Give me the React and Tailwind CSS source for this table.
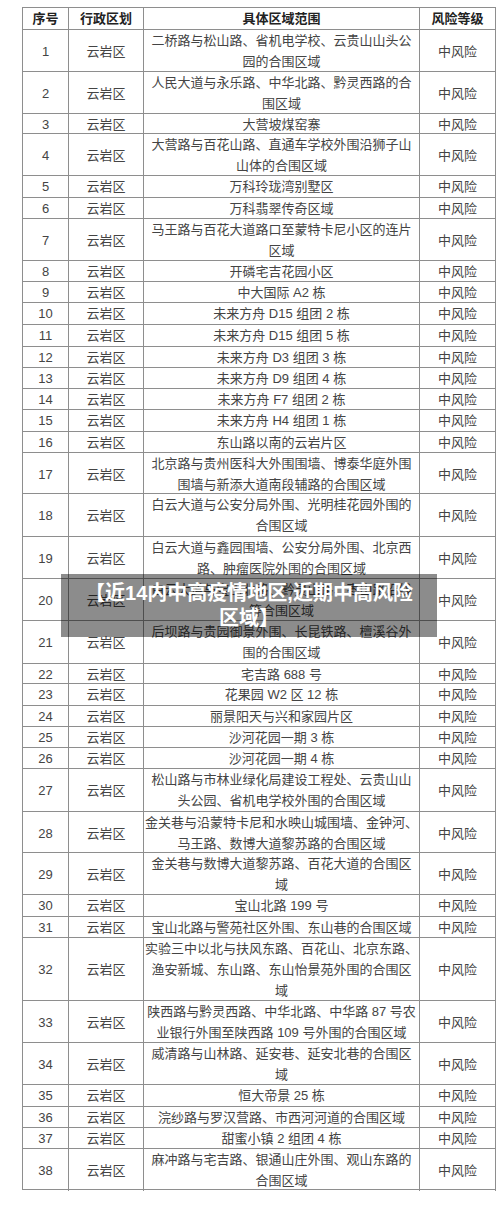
import React from "react";

const rows = [
  { n: 1, h: "h-[42px]", t: ["二桥路与松山路、省机电学校、云贵山山头公", "园的合围区域"] },
  { n: 2, h: "h-[42px]", t: ["人民大道与永乐路、中华北路、黔灵西路的合", "围区域"] },
  { n: 3, h: "h-[20px]", t: ["大营坡煤窑寨"] },
  { n: 4, h: "h-[42px]", t: ["大营路与百花山路、直通车学校外围沿狮子山", "山体的合围区域"] },
  { n: 5, h: "h-[22px]", t: ["万科玲珑湾别墅区"] },
  { n: 6, h: "h-[21px]", t: ["万科翡翠传奇区域"] },
  { n: 7, h: "h-[42px]", t: ["马王路与百花大道路口至蒙特卡尼小区的连片", "区域"] },
  { n: 8, h: "h-[21px]", t: ["开磷宅吉花园小区"] },
  { n: 9, h: "h-[21px]", t: ["中大国际 A2 栋"] },
  { n: 10, h: "h-[22px]", t: ["未来方舟 D15 组团 2 栋"] },
  { n: 11, h: "h-[22px]", t: ["未来方舟 D15 组团 5 栋"] },
  { n: 12, h: "h-[21px]", t: ["未来方舟 D3 组团 3 栋"] },
  { n: 13, h: "h-[21px]", t: ["未来方舟 D9 组团 4 栋"] },
  { n: 14, h: "h-[21px]", t: ["未来方舟 F7 组团 2 栋"] },
  { n: 15, h: "h-[22px]", t: ["未来方舟 H4 组团 1 栋"] },
  { n: 16, h: "h-[21px]", t: ["东山路以南的云岩片区"] },
  { n: 17, h: "h-[41px]", t: ["北京路与贵州医科大外围围墙、博泰华庭外围", "围墙与新添大道南段辅路的合围区域"] },
  { n: 18, h: "h-[43px]", t: ["白云大道与公安分局外围、光明桂花园外围的", "合围区域"] },
  { n: 19, h: "h-[42px]", t: ["白云大道与鑫园围墙、公安分局外围、北京西", "路、肿瘤医院外围的合围区域"] },
  { n: 20, h: "h-[42px]", t: ["白云大道与宝山北路、黔灵山路、枣山路沿线", "等合围区域"] },
  { n: 21, h: "h-[43px]", t: ["后坝路与贵园御景外围、长昆铁路、檀溪谷外", "围的合围区域"] },
  { n: 22, h: "h-[20px]", t: ["宅吉路 688 号"] },
  { n: 23, h: "h-[22px]", t: ["花果园 W2 区 12 栋"] },
  { n: 24, h: "h-[21px]", t: ["丽景阳天与兴和家园片区"] },
  { n: 25, h: "h-[21px]", t: ["沙河花园一期 3 栋"] },
  { n: 26, h: "h-[21px]", t: ["沙河花园一期 4 栋"] },
  { n: 27, h: "h-[43px]", t: ["松山路与市林业绿化局建设工程处、云贵山山", "头公园、省机电学校外围的合围区域"] },
  { n: 28, h: "h-[41px]", t: ["金关巷与沿蒙特卡尼和水映山城围墙、金钟河、", "马王路、数博大道黎苏路的合围区域"] },
  { n: 29, h: "h-[42px]", t: ["金关巷与数博大道黎苏路、百花大道的合围区", "域"] },
  { n: 30, h: "h-[22px]", t: ["宝山北路 199 号"] },
  { n: 31, h: "h-[21px]", t: ["宝山北路与警苑社区外围、东山巷的合围区域"] },
  { n: 32, h: "h-[63px]", t: ["实验三中以北与扶风东路、百花山、北京东路、", "渔安新城、东山路、东山怡景苑外围的合围区", "域"] },
  { n: 33, h: "h-[42px]", t: ["陕西路与黔灵西路、中华北路、中华路 87 号农", "业银行外围至陕西路 109 号外围的合围区域"] },
  { n: 34, h: "h-[42px]", t: ["威清路与山林路、延安巷、延安北巷的合围区", "域"] },
  { n: 35, h: "h-[22px]", t: ["恒大帝景 25 栋"] },
  { n: 36, h: "h-[21px]", t: ["浣纱路与罗汉营路、市西河河道的合围区域"] },
  { n: 37, h: "h-[21px]", t: ["甜蜜小镇 2 组团 4 栋"] },
  { n: 38, h: "h-[41px]", t: ["麻冲路与宅吉路、银通山庄外围、观山东路的", "合围区域"] },
];

const cell = "border-r border-[#8e8e8e] flex flex-col items-center justify-center overflow-visible";

export default function App() {
  return (
    <div className="relative w-[500px] h-[1211px] bg-white pt-[7px] font-['Liberation_Sans','Noto_Sans_CJK_SC',sans-serif] text-[13px] text-[#444]">
      <div className="ml-[22px] w-[474px] border-t border-l border-[#8e8e8e]">
        <div className="grid grid-cols-[46px_75px_276px_76px] h-[22px] border-b border-[#8e8e8e] font-bold text-[#222] leading-[21px]">
          <div className={cell}>序号</div>
          <div className={cell}>行政区划</div>
          <div className={cell}>具体区域范围</div>
          <div className={cell}>风险等级</div>
        </div>
        {rows.map((r) => (
          <div
            key={r.n}
            className={"grid grid-cols-[46px_75px_276px_76px] border-b border-[#8e8e8e] leading-[21px] " + r.h}
          >
            <div className={cell}>{r.n}</div>
            <div className={cell}>云岩区</div>
            <div className={cell}>
              {r.t.map((line, i) => (
                <span key={i} className="block whitespace-nowrap text-center">
                  {line}
                </span>
              ))}
            </div>
            <div className={cell}>中风险</div>
          </div>
        ))}
      </div>
      <div className="absolute left-[61px] top-[574px] w-[376px] h-[63px] bg-black/45 flex flex-col items-center justify-center text-white font-bold text-[20px] leading-[25px]">
        <span className="block whitespace-nowrap">【近14内中高疫情地区,近期中高风险</span>
        <span className="block whitespace-nowrap">区域】</span>
      </div>
    </div>
  );
}
